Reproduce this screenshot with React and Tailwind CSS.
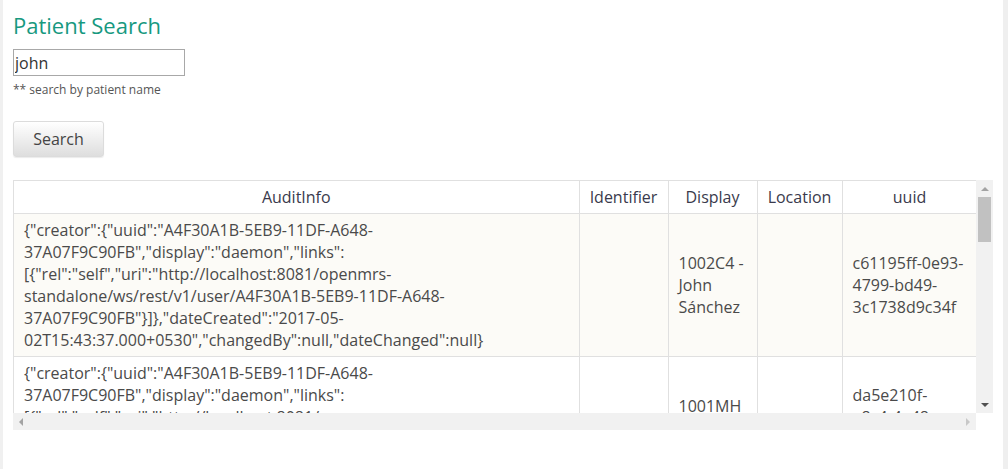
import React from 'react';

const rows = [
  {
    audit: [
      '{"creator":{"uuid":"A4F30A1B-5EB9-11DF-A648-',
      '37A07F9C90FB","display":"daemon","links":',
      '[{"rel":"self","uri":"http://localhost:8081/openmrs-',
      'standalone/ws/rest/v1/user/A4F30A1B-5EB9-11DF-A648-',
      '37A07F9C90FB"}]},"dateCreated":"2017-05-',
      '02T15:43:37.000+0530","changedBy":null,"dateChanged":null}',
    ],
    display: ['1002C4 -', 'John', 'Sánchez'],
    uuid: ['c61195ff-0e93-', '4799-bd49-', '3c1738d9c34f'],
    bg: 'bg-[#fcfbf7]',
  },
  {
    audit: [
      '{"creator":{"uuid":"A4F30A1B-5EB9-11DF-A648-',
      '37A07F9C90FB","display":"daemon","links":',
      '[{"rel":"self","uri":"http://localhost:8081/openmrs-',
      'standalone/ws/rest/v1/user/A4F30A1B-5EB9-11DF-A648-',
      '37A07F9C90FB"}]},"dateCreated":"2017-05-',
      '02T15:43:29.000+0530","changedBy":null,"dateChanged":null}',
    ],
    display: ['1001MH', '- John', 'Smith'],
    uuid: ['da5e210f-', 'e8c4-4a48-', '9b3e-', '6a1f0c2b7d91'],
    bg: 'bg-white',
  },
];

const Lines = ({ items }) => items.map((l, i) => <div key={i} className="whitespace-nowrap">{l}</div>);

export default function App() {
  return (
    <div className="flex min-h-[469px] bg-white font-['Open_Sans',sans-serif]">
      <div className="w-[3px] bg-[#f0f0f0]" />
      <main className="flex-1 pl-[10px] pt-[10px]">
        <h1 className="text-[22px] leading-[30px] text-[#17997f]">Patient Search</h1>
        <input
          defaultValue="john"
          className="mt-[9px] block h-[27px] w-[172px] border border-[#a8a8a8] px-[1px] text-[16px] text-[#333] outline-none"
        />
        <p className="mt-[5px] text-[12px] leading-[18px] text-[#555]">** search by patient name</p>
        <button className="mt-[22px] block h-[36px] w-[91px] rounded-[3px] border border-[#dcdcdc] bg-gradient-to-b from-white to-[#dedede] text-[16px] text-[#444] shadow-[0_1px_1px_rgba(0,0,0,0.08)]">
          Search
        </button>

        <div className="mt-[23px] grid grid-cols-[963px_17px] grid-rows-[233px_17px]">
          <div className="overflow-hidden border-l border-[#e0e0e0]">
            <table className="w-[963px] table-fixed border-collapse text-[16px] leading-[22px]">
              <colgroup>
                <col className="w-[565px]" />
                <col className="w-[89px]" />
                <col className="w-[89px]" />
                <col className="w-[85px]" />
                <col className="w-[135px]" />
              </colgroup>
              <thead>
                <tr className="border-y border-[#e0e0e0] text-[#3a3a4c]">
                  <th className="py-[5px] font-normal">AuditInfo</th>
                  <th className="border-l border-[#e0e0e0] py-[5px] font-normal">Identifier</th>
                  <th className="border-l border-[#e0e0e0] py-[5px] font-normal">Display</th>
                  <th className="border-l border-[#e0e0e0] py-[5px] font-normal">Location</th>
                  <th className="border-x border-[#e0e0e0] py-[5px] font-normal">uuid</th>
                </tr>
              </thead>
              <tbody className="text-[#4a4a4a]">
                {rows.map((r, i) => (
                  <tr key={i} className={`border-b border-[#e0e0e0] ${r.bg}`}>
                    <td className="px-[10px] py-[5px] align-top">
                      <Lines items={r.audit} />
                    </td>
                    <td className="border-l border-[#e0e0e0]" />
                    <td className="border-l border-[#e0e0e0] px-[10px] align-middle">
                      <Lines items={r.display} />
                    </td>
                    <td className="border-l border-[#e0e0e0]" />
                    <td className="border-x border-[#e0e0e0] px-[10px] align-middle">
                      <Lines items={r.uuid} />
                    </td>
                  </tr>
                ))}
              </tbody>
            </table>
          </div>

          <div className="flex flex-col items-center bg-[#f1f1f1]">
            <div className="flex h-[17px] items-center justify-center">
              <div className="h-0 w-0 border-x-[4px] border-b-[4px] border-x-transparent border-b-[#a3a3a3]" />
            </div>
            <div className="h-[45px] w-[13px] bg-[#c1c1c1]" />
            <div className="flex-1" />
            <div className="flex h-[17px] items-center justify-center">
              <div className="h-0 w-0 border-x-[4px] border-t-[4px] border-x-transparent border-t-[#505050]" />
            </div>
          </div>

          <div className="flex items-center justify-between bg-[#f1f1f1] px-[6px]">
            <div className="h-0 w-0 border-y-[4px] border-r-[4px] border-y-transparent border-r-[#a3a3a3]" />
            <div className="h-0 w-0 border-y-[4px] border-l-[4px] border-y-transparent border-l-[#c8c8c8]" />
          </div>
          <div className="bg-white" />
        </div>
      </main>
      <div className="w-[5px] bg-[#efefef]" />
    </div>
  );
}
